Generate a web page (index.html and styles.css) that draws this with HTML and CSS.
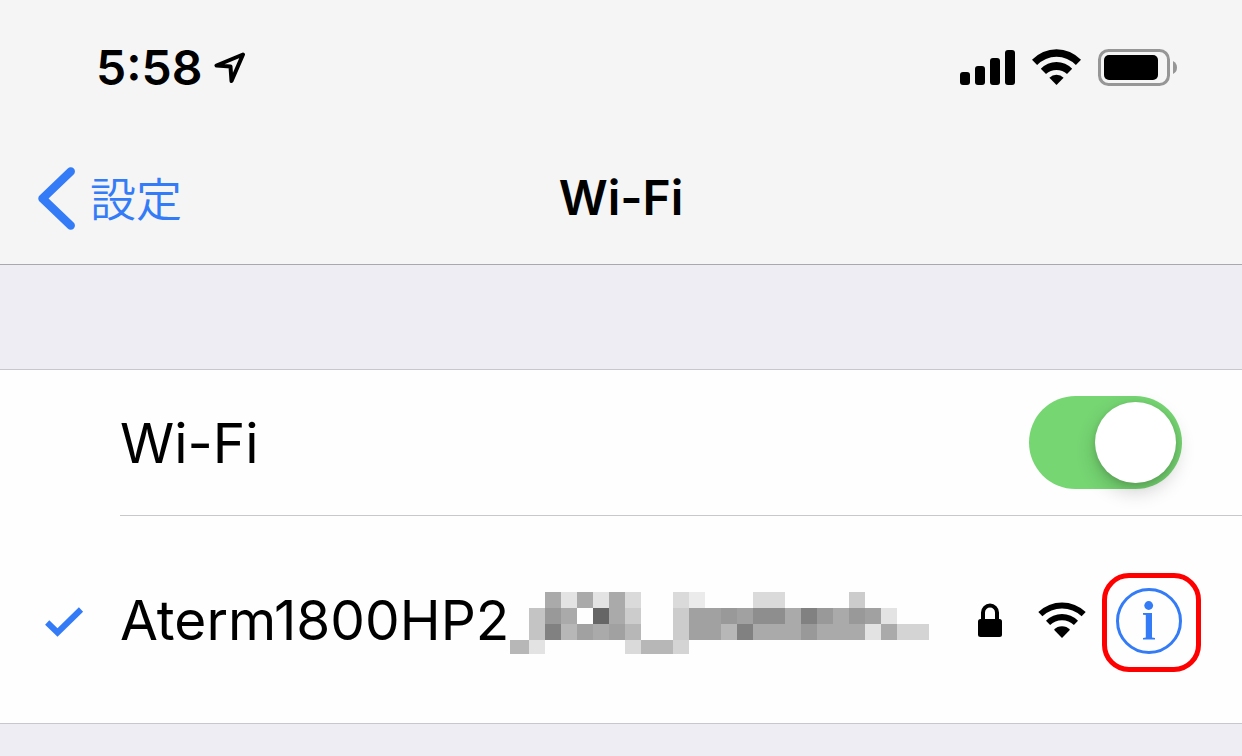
FILE: index.html
```html
<!DOCTYPE html>
<html lang="ja">
<head>
<meta charset="utf-8">
<meta name="viewport" content="width=device-width, initial-scale=1">
<title>Wi-Fi</title>
<link rel="stylesheet" href="styles.css">
</head>
<body>
<header class="header">
  <div class="status">
    <div class="status-group">
      <span class="time">5:58</span>
      <svg class="location" width="33" height="34" viewBox="0 0 33 34" aria-hidden="true"><path d="M29 3.500L2.500 14.500L16.500 15.500L17.500 30Z" fill="none" stroke="#000" stroke-width="4" stroke-linejoin="round"/></svg>
    </div>
    <div class="status-group indicators">
      <svg width="55" height="37" viewBox="0 0 55 37" aria-hidden="true"><rect x="0" y="23" width="10" height="13" rx="3"/><rect x="15" y="17" width="10" height="19" rx="3"/><rect x="30" y="9" width="10" height="27" rx="3"/><rect x="45" y="1" width="10" height="35" rx="3"/></svg>
      <svg width="49" height="37" viewBox="0 0 49 37" aria-hidden="true"><path d="M0 10.800A33.500 33.500 0 0 1 49 10.800L43.900 16A27 27 0 0 0 5.100 16Z"/><path d="M8.800 19.800A21.500 21.500 0 0 1 40.200 19.800L35 25A15.500 15.500 0 0 0 14 25Z"/><path d="M17.400 28.700A10 10 0 0 1 31.600 28.700L24.500 36Z"/></svg>
      <svg width="80" height="37" viewBox="0 0 80 37" aria-hidden="true"><rect x="1.500" y="1.500" width="69" height="34" rx="9" fill="none" stroke="#969696" stroke-width="3"/><rect x="6" y="6" width="54" height="25" rx="5"/><path d="M75 12Q79 14 79 18.500T75 25Z" fill="#969696"/></svg>
    </div>
  </div>
  <nav class="nav">
    <a class="back" href="#">
      <svg width="38" height="64" viewBox="0 0 38 64" aria-hidden="true"><path d="M32.700 5.500L4.500 32.500L32.700 59.500" fill="none" stroke="#347bf7" stroke-width="8.500" stroke-linecap="round" stroke-linejoin="round"/></svg>
      <span class="back-text">設定</span>
    </a>
    <h1 class="title">Wi-Fi</h1>
  </nav>
</header>
<main class="list">
  <div class="row">
    <label class="label" for="wifi">Wi-Fi</label>
    <input class="toggle" id="wifi" type="checkbox" role="switch" checked>
  </div>
  <div class="row network">
    <svg class="check" width="39" height="32" viewBox="0 0 39 32" aria-hidden="true"><path d="M2.200 15.500L12.500 25.500L36 2.500" fill="none" stroke="#347bf7" stroke-width="6"/></svg>
    <span class="label">Aterm1800HP2</span>
    <svg class="mosaic" width="420" height="62" viewBox="0 0 420 62" shape-rendering="crispEdges" aria-hidden="true">
      <path fill="#aaa" d="M36 0h16v16h-16zM68 0h16v16h-16zM100 0h16v16h-16zM52 16h16v16h-16zM100 16h16v16h-16zM276 16h16v16h-16zM324 16h16v16h-16zM84 32h16v16h-16zM244 32h48v16h-48zM308 32h48v16h-48zM372 32h16v16h-16z"/>
      <path fill="#e3e3e3" d="M52 0h16v16h-16zM84 0h16v16h-16zM372 16h16v16h-16zM356 32h16v16h-16zM20 48h16v14h-16z"/>
      <path fill="#dadada" d="M116 0h16v16h-16zM164 0h16v16h-16zM244 0h32v16h-32zM116 48h16v14h-16z"/>
      <path fill="#ebebeb" d="M180 0h16v16h-16z"/>
      <path fill="#ccc" d="M340 0h16v16h-16zM116 16h16v16h-16zM164 16h16v32h-16z"/>
      <path fill="#c4c4c4" d="M20 16h16v32h-16z"/>
      <path fill="#999" d="M36 16h16v16h-16zM212 16h16v16h-16zM308 16h16v16h-16zM340 16h16v16h-16zM292 32h16v16h-16z"/>
      <path fill="#666" d="M84 16h16v16h-16z"/>
      <path fill="#a1a1a2" d="M180 16h32v32h-32zM228 16h16v16h-16zM356 16h16v16h-16zM68 32h16v16h-16zM100 32h16v16h-16z"/>
      <path fill="#8e8e8e" d="M244 16h32v16h-32z"/>
      <path fill="#818181" d="M292 16h16v16h-16zM36 32h16v16h-16zM228 32h16v16h-16z"/>
      <path fill="#b7b7b7" d="M52 32h16v16h-16zM116 32h16v16h-16zM212 32h16v16h-16zM1 48h19v14h-19zM132 48h32v14h-32z"/>
      <path fill="#d4d4d4" d="M388 32h32v16h-32zM164 48h16v14h-16z"/>
    </svg>
    <div class="signal">
      <svg width="24" height="34" viewBox="0 0 24 34" aria-hidden="true"><path d="M5 17V9.500a7 7 0 0 1 14 0V17" fill="none" stroke="#000" stroke-width="4"/><rect y="16" width="24" height="18" rx="2.500"/></svg>
      <svg width="48" height="36" viewBox="0 0 48 36" aria-hidden="true"><path d="M.3 10A34.500 34.500 0 0 1 47.700 10L43.600 14.200A29 29 0 0 0 4.400 14.200Z"/><path d="M8 18.800A22.500 22.500 0 0 1 40 18.800L35.900 23A17 17 0 0 0 12.100 23Z"/><path d="M16 27.800A11 11 0 0 1 32 27.800L24 36Z"/></svg>
    </div>
    <button class="info" type="button" aria-label="詳細情報"><svg width="66" height="66" viewBox="0 0 66 66" fill="#347bf7" aria-hidden="true"><circle cx="33" cy="33" r="31.500" fill="none" stroke="#347bf7" stroke-width="3"/><circle cx="32.700" cy="17.500" r="4.400"/><path d="M27 25h9v24.500l3 .5v1.500H27V50l2.800-.5v-22.500L27 26.700Z"/></svg></button>
  </div>
</main>
</body>
</html>
```
FILE: styles.css
```css
* {
  box-sizing: border-box;
}

body {
  margin: 0;
  background: #eeedf3;
  color: #000;
  font-family: Inter, "Noto Sans CJK JP", sans-serif;
}

svg {
  display: block;
  flex: none;
}

.header {
  background: #f5f5f5;
  border-bottom: 1px solid #a9a9ac;
}

.status {
  display: flex;
  align-items: center;
  justify-content: space-between;
  height: 132px;
  padding: 3px 64px 0 96px;
}

.status-group {
  display: flex;
  align-items: center;
  gap: 12px;
}

.indicators {
  gap: 17px;
}

.time {
  font-size: 48px;
  font-weight: 600;
  line-height: 61px;
}

.nav {
  display: grid;
  grid-template-columns: 1fr auto 1fr;
  align-items: center;
  height: 132px;
  padding: 0 38px;
}

.back {
  display: flex;
  align-items: center;
  gap: 14px;
  color: #347bf7;
  text-decoration: none;
}

.back-text {
  padding-bottom: 4px;
  font-family: "Noto Sans CJK JP", sans-serif;
  font-size: 46px;
  font-weight: 350;
  line-height: 60px;
}

.title {
  margin: 0;
  font-size: 48px;
  font-weight: 600;
  line-height: 60px;
}

.list {
  margin-top: 104px;
  background: #fefefe;
  border-top: 1px solid #c8c7cc;
  border-bottom: 1px solid #c8c7cc;
}

.row {
  display: flex;
  align-items: center;
  min-height: 146px;
  margin-left: 120px;
  padding-right: 60px;
  border-bottom: 1px solid #c8c7cc;
}

.label {
  font-size: 55px;
  line-height: 64px;
}

.toggle {
  appearance: none;
  display: flex;
  width: 153px;
  height: 93px;
  margin: 0 0 0 auto;
  padding: 6px;
  border-radius: 47px;
  background: #ddd;
}

.toggle::before {
  content: "";
  width: 81px;
  height: 81px;
  border-radius: 50%;
  background: #fff;
  box-shadow: 0 8px 20px rgba(0, 0, 0, 0.2), 0 2px 6px rgba(0, 0, 0, 0.12);
}

.toggle:checked {
  justify-content: flex-end;
  background: #76d672;
}

.network {
  min-height: 207px;
  margin-left: 0;
  padding: 6px 41px 0 45px;
  border-bottom: 0;
}

.network .label {
  padding-bottom: 6px;
}

.check {
  margin-right: 36px;
}

.signal {
  display: flex;
  align-items: center;
  gap: 36px;
  margin: 0 16px 0 auto;
  padding-bottom: 6px;
}

.info {
  display: grid;
  place-items: center;
  width: 99px;
  height: 99px;
  padding: 0 5px 3px 0;
  border: 5px solid #f00;
  border-radius: 27px;
  background: none;
}
```
